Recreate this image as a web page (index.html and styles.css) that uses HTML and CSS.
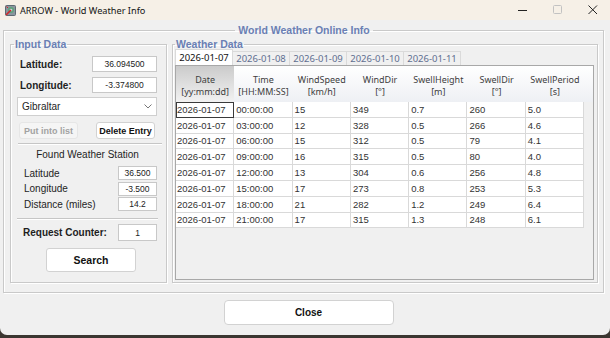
FILE: index.html
```html
<!DOCTYPE html>
<html lang="en">
<head>
    <meta charset="UTF-8">
    <title>ARROW - World Weather Info</title>
    <link rel="stylesheet" href="styles.css">
</head>
<body>
<div class="window">

    <!-- title bar -->
    <div class="titlebar">
        <svg class="appicon" viewBox="0 0 11 11">
            <rect x="0.5" y="0.5" width="10" height="10" rx="1" fill="#8a969e" stroke="#5e6a72"/>
            <circle cx="6" cy="5" r="3" fill="#5fa27a"/>
            <circle cx="6" cy="5" r="1.3" fill="#c9d6dc"/>
            <path d="M1 10 L6 5" stroke="#d3262b" stroke-width="1.6"/>
            <path d="M1.5 1.5 L3 3" stroke="#d3262b" stroke-width="1"/>
        </svg>
        <span class="caption">ARROW - World Weather Info</span>
        <div class="controls">
            <span class="ctl"><svg width="10" height="10" viewBox="0 0 10 10"><path d="M0 5.5 H9" stroke="#222" stroke-width="1"/></svg></span>
            <span class="ctl"><svg width="10" height="10" viewBox="0 0 10 10"><rect x="0.5" y="0.5" width="8" height="8" rx="1" fill="none" stroke="#c2c2c2"/></svg></span>
            <span class="ctl"><svg width="10" height="10" viewBox="0 0 10 10"><path d="M0.5 0.5 L9 9 M9 0.5 L0.5 9" stroke="#222" stroke-width="1"/></svg></span>
        </div>
    </div>

    <div class="client">
        <fieldset class="group outer">
            <legend>World Weather Online Info</legend>
            <div class="columns">

                <!-- left column -->
                <fieldset class="group input">
                    <legend>Input Data</legend>
                    <div class="field">
                        <label>Latitude:</label>
                        <span class="box">36.094500</span>
                    </div>
                    <div class="field">
                        <label>Longitude:</label>
                        <span class="box">-3.374800</span>
                    </div>
                    <div class="combo">
                        <span>Gibraltar</span>
                        <svg class="chevron" width="8" height="5" viewBox="0 0 8 5"><path d="M0.5 0.5 L4 4 L7.5 0.5" fill="none" stroke="#777" stroke-width="1"/></svg>
                    </div>
                    <div class="buttons">
                        <button class="btn disabled">Put into list</button>
                        <button class="btn">Delete Entry</button>
                    </div>
                    <div class="sep first"></div>
                    <div class="station-title">Found Weather Station</div>
                    <div class="station">
                        <label>Latitude</label><span class="box">36.500</span>
                        <label>Longitude</label><span class="box">-3.500</span>
                        <label>Distance (miles)</label><span class="box">14.2</span>
                    </div>
                    <div class="sep second"></div>
                    <div class="counter">
                        <label>Request Counter:</label>
                        <span class="box">1</span>
                    </div>
                    <button class="btn search">Search</button>
                </fieldset>

                <!-- right column -->
                <fieldset class="group weather">
                    <legend>Weather Data</legend>
                    <div class="tabs">
                        <span class="tab active">2026-01-07</span>
                        <span class="tab">2026-01-08</span>
                        <span class="tab">2026-01-09</span>
                        <span class="tab">2026-01-10</span>
                        <span class="tab">2026-01-11</span>
                    </div>
                    <div class="panel">
                        <table class="grid">
                            <thead>
                                <tr>
                                    <th class="sorted">Date<br>[yy:mm:dd]</th>
                                    <th>Time<br>[HH:MM:SS]</th>
                                    <th>WindSpeed<br>[km/h]</th>
                                    <th>WindDir<br>[°]</th>
                                    <th>SwellHeight<br>[m]</th>
                                    <th>SwellDir<br>[°]</th>
                                    <th>SwellPeriod<br>[s]</th>
                                    <th class="filler"></th>
                                </tr>
                            </thead>
                            <tbody>
                                <tr><td class="focus">2026-01-07</td><td>00:00:00</td><td>15</td><td>349</td><td>0.7</td><td>260</td><td>5.0</td><td class="filler"></td></tr>
                                <tr><td>2026-01-07</td><td>03:00:00</td><td>12</td><td>328</td><td>0.5</td><td>266</td><td>4.6</td><td class="filler"></td></tr>
                                <tr><td>2026-01-07</td><td>06:00:00</td><td>15</td><td>312</td><td>0.5</td><td>79</td><td>4.1</td><td class="filler"></td></tr>
                                <tr><td>2026-01-07</td><td>09:00:00</td><td>16</td><td>315</td><td>0.5</td><td>80</td><td>4.0</td><td class="filler"></td></tr>
                                <tr><td>2026-01-07</td><td>12:00:00</td><td>13</td><td>304</td><td>0.6</td><td>256</td><td>4.8</td><td class="filler"></td></tr>
                                <tr><td>2026-01-07</td><td>15:00:00</td><td>17</td><td>273</td><td>0.8</td><td>253</td><td>5.3</td><td class="filler"></td></tr>
                                <tr><td>2026-01-07</td><td>18:00:00</td><td>21</td><td>282</td><td>1.2</td><td>249</td><td>6.4</td><td class="filler"></td></tr>
                                <tr><td>2026-01-07</td><td>21:00:00</td><td>17</td><td>315</td><td>1.3</td><td>248</td><td>6.1</td><td class="filler"></td></tr>
                            </tbody>
                        </table>
                    </div>
                </fieldset>

            </div>
        </fieldset>

        <div class="footer">
            <button class="btn close">Close</button>
        </div>
    </div>
</div>
</body>
</html>
```

FILE: styles.css
```css
* {
    margin: 0;
    padding: 0;
    box-sizing: border-box;
}
body {
    background: #3b3631;
    font-family: "Liberation Sans", Arial, sans-serif;
    color: #1e1e1e;
}
.window {
    width: 610px;
    height: 335px;
    background: #f0f0f0;
    border-radius: 0 0 7px 7px;
    overflow: hidden;
}

/* title bar */
.titlebar {
    height: 20px;
    background: #f6f0e7;
    display: flex;
    align-items: center;
}
.appicon {
    width: 11px;
    height: 11px;
    margin-left: 5px;
}
.caption {
    margin-left: 4px;
    font-family: "Noto Sans", sans-serif;
    font-size: 9.2px;
    color: #141414;
}
.controls {
    margin-left: auto;
    display: flex;
}
.ctl {
    width: 35px;
    height: 20px;
    display: flex;
    align-items: center;
    justify-content: center;
}

/* group boxes */
.client {
    padding: 4px 0 0 3px;
}
.group {
    border: 1px solid #c9c9c9;
    box-shadow: 1px 1px 0 #fff, inset 1px 1px 0 #fff;
}
.group legend {
    font-weight: bold;
    font-size: 10.5px;
    line-height: 13px;
    color: #6a7fb4;
    padding: 0 1px;
}
.outer {
    width: 601px;
    padding: 1px 5px 9px 6px;
}
.outer > legend {
    margin: 0 auto;
    padding: 0 3px;
}
.columns {
    display: flex;
    gap: 5px;
}
.input {
    width: 157px;
    height: 245px;
    padding: 0 8px 0 6px;
}
.input legend {
    margin-left: -3px;
}
.weather {
    width: 426px;
    height: 245px;
    padding: 0 3px 2px 2px;
}

/* input column */
.box {
    background: #fff;
    border: 1px solid #c8c8c8;
    font-size: 8.5px;
    color: #222;
    display: flex;
    align-items: center;
    justify-content: center;
}
.field {
    display: flex;
    align-items: center;
    justify-content: space-between;
    height: 16px;
    margin-top: 5px;
}
.field label {
    font-weight: bold;
    font-size: 10px;
    margin-left: 3px;
}
.field .box {
    width: 65px;
    height: 16px;
    margin-right: 1px;
}
.combo {
    margin-top: 4px;
    width: 140px;
    height: 19px;
    background: #fff;
    border: 1px solid #cfcfcf;
    display: flex;
    align-items: center;
    padding-left: 4px;
    font-size: 10px;
}
.chevron {
    margin-left: auto;
    margin-right: 4px;
}
.buttons {
    margin-top: 6px;
    display: flex;
    gap: 18px;
    padding-left: 2px;
}
.btn {
    background: #fff;
    border: 1px solid #d2d2d2;
    border-radius: 3px;
    font-family: "Liberation Sans", Arial, sans-serif;
    font-weight: bold;
    font-size: 9px;
    color: #111;
}
.buttons .btn {
    width: 59px;
    height: 17px;
}
.btn.disabled {
    background: #f5f5f5;
    border-color: #e6e6e6;
    color: #a2a2a2;
}
.sep {
    height: 2px;
    border-top: 1px solid #c6c6c6;
    border-bottom: 1px solid #fff;
}
.sep.first {
    margin: 4px -4px 0 1px;
}
.sep.second {
    margin-top: 7px;
}
.station-title {
    margin-top: 3px;
    text-align: center;
    font-size: 10px;
    line-height: 13px;
}
.station {
    margin-top: 5px;
    margin-right: 1px;
    display: grid;
    grid-template-columns: 1fr 39px;
    grid-auto-rows: 14px;
    row-gap: 1.5px;
    align-items: center;
}
.station label {
    font-size: 10px;
    padding-left: 7px;
}
.station .box {
    height: 14px;
}
.counter {
    margin-top: 4px;
    margin-right: 1px;
    height: 17px;
    display: flex;
    align-items: center;
    justify-content: space-between;
}
.counter label {
    font-weight: bold;
    font-size: 10px;
    margin-left: 6px;
}
.counter .box {
    width: 39px;
    height: 17px;
}
.btn.search {
    margin: 7px 0 0 29px;
    width: 90px;
    height: 24px;
    font-size: 10.5px;
}

/* tabs */
.tabs {
    display: flex;
    align-items: flex-end;
    height: 14px;
}
.tab {
    width: 58px;
    height: 14px;
    border: 1px solid #dadada;
    border-bottom: none;
    margin-right: -1px;
    background: #f0f0f0;
    font-family: "Noto Sans", sans-serif;
    font-size: 9.5px;
    line-height: 13px;
    color: #5f6f90;
    text-align: center;
}
.tab.active {
    height: 16px;
    line-height: 15px;
    background: #fff;
    color: #111;
}

/* data grid */
.panel {
    height: 215px;
    border: 1px solid #a8a8a8;
    background: #f0f0f0;
}
.grid {
    width: 100%;
    table-layout: fixed;
    border-spacing: 0;
}
.grid th {
    width: 58.3px;
    height: 36px;
    font-family: "Noto Sans", sans-serif;
    font-weight: normal;
    font-size: 9px;
    line-height: 12px;
    color: #3d3d3d;
    padding-top: 3px;
    background: linear-gradient(#ffffff, #eef0f4);
}
.grid th.sorted {
    background: linear-gradient(#cbcbcb, #f2f2f2);
}
.grid th.filler {
    width: auto;
}
.grid tbody tr {
    height: 15.8px;
}
.grid td {
    background: #fff;
    border-right: 1px solid #d9d9d9;
    border-bottom: 1px solid #d9d9d9;
    font-size: 9.5px;
    color: #333;
    padding: 0 2px;
    white-space: nowrap;
    overflow: hidden;
}
.grid td:first-child {
    padding-left: 1px;
}
.grid td.filler {
    background: transparent;
    border: none;
}
.grid td.focus {
    outline: 1px solid #3a3a3a;
    outline-offset: -1px;
}

/* footer */
.footer {
    display: flex;
    justify-content: center;
    padding-left: 4px;
    margin-top: 7px;
}
.btn.close {
    width: 170px;
    height: 25px;
    border-radius: 4px;
    font-size: 10px;
}
```
